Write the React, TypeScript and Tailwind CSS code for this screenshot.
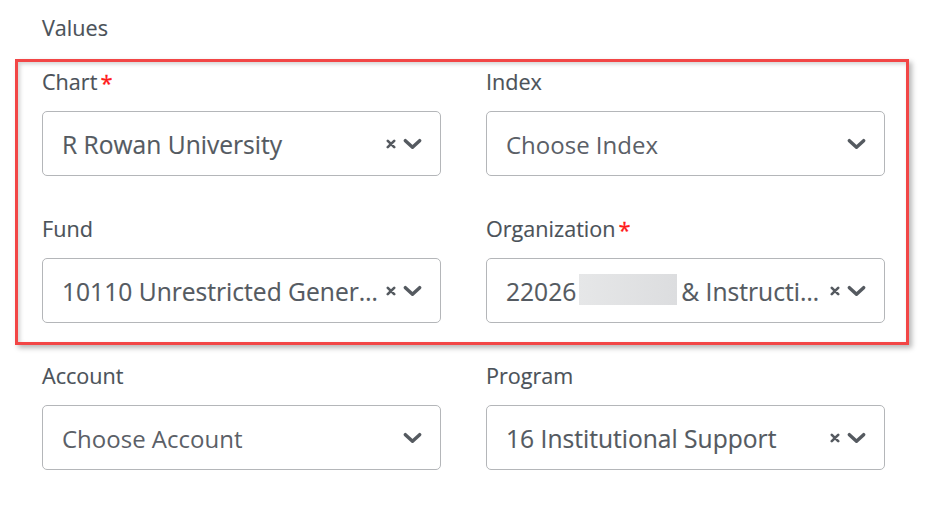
import React from 'react';

type Field = {
  label: string;
  required?: boolean;
  value?: React.ReactNode;
  placeholder?: string;
  clearable?: boolean;
};

function Caret() {
  return (
    <svg viewBox="0 0 20 12" className="w-[19px] h-[12px]" fill="none">
      <path d="M2.5 2.5 L10 9.5 L17.5 2.5" stroke="#555a60" strokeWidth="3.6" strokeLinecap="round" strokeLinejoin="round" />
    </svg>
  );
}

function Clear() {
  return (
    <svg viewBox="0 0 10 10" className="w-[10px] h-[10px]" fill="none">
      <path d="M1.8 1.8 L8.2 8.2 M8.2 1.8 L1.8 8.2" stroke="#555a60" strokeWidth="2.6" strokeLinecap="round" />
    </svg>
  );
}

function SelectField({ label, required, value, placeholder, clearable }: Field) {
  return (
    <div className="flex flex-col">
      <div className="h-[28px] flex items-center text-[21.6px] text-[#4b5259] leading-[28px] [-webkit-text-stroke:0.15px_#4b5259]">
        {label}
        {required && <span className="text-[#ff1a1a] ml-[3px] text-[22px] [-webkit-text-stroke:0.3px_#ff1a1a]">*</span>}
      </div>
      <div className="mt-[15px] h-[65px] border border-[#b4b6b9] rounded-[5px] bg-white flex items-center pl-[19px] pr-[18px]">
        {value ? (
          <div className="flex-1 min-w-0 truncate pt-[3px] text-[24.6px] text-[#545a61] [-webkit-text-stroke:0.15px_#545a61]">
            {value}
          </div>
        ) : (
          <div className="flex-1 min-w-0 truncate pt-[3px] text-[24px] text-[#5b6067]">{placeholder}</div>
        )}
        <div className="flex items-center gap-[7px] ml-[6px]">
          {clearable && <Clear />}
          <Caret />
        </div>
      </div>
    </div>
  );
}

export default function App() {
  return (
    <div className="w-[928px] h-[507px] bg-white font-['Open_Sans',sans-serif] pt-[14px]">
      <div className="pl-[42px] h-[28px] flex items-center text-[21.6px] text-[#4b5259] [-webkit-text-stroke:0.15px_#4b5259]">Values</div>

      <div className="mt-[17px] ml-[15px] w-[894px] border-[3px] border-[#f24646] pl-[24px] pr-[21px] pt-[6px] pb-[19px] shadow-[3px_3px_5px_rgba(0,0,0,0.28),inset_2px_2px_4px_rgba(0,0,0,0.18)]">
        <div className="grid grid-cols-2 gap-x-[45px] gap-y-[39px]">
          <SelectField label="Chart" required value="R Rowan University" clearable />
          <SelectField label="Index" placeholder="Choose Index" />
          <SelectField label="Fund" value="10110 Unrestricted General Fund" clearable />
          <SelectField
            label="Organization"
            required
            clearable
            value={
              <span className="flex items-center">
                <span className="shrink-0">22026</span>
                <span className="shrink-0 inline-block w-[98px] h-[31px] ml-[3px] mr-[4px] -mt-[4px] bg-gradient-to-r from-[#e6e7e8] to-[#dcdddf]" />
                <span className="truncate">&amp; Instructional Technology</span>
              </span>
            }
          />
        </div>
      </div>

      <div className="mt-[17px] pl-[42px] pr-[43px] grid grid-cols-2 gap-x-[45px]">
        <SelectField label="Account" placeholder="Choose Account" />
        <SelectField label="Program" value="16 Institutional Support" clearable />
      </div>
    </div>
  );
}
